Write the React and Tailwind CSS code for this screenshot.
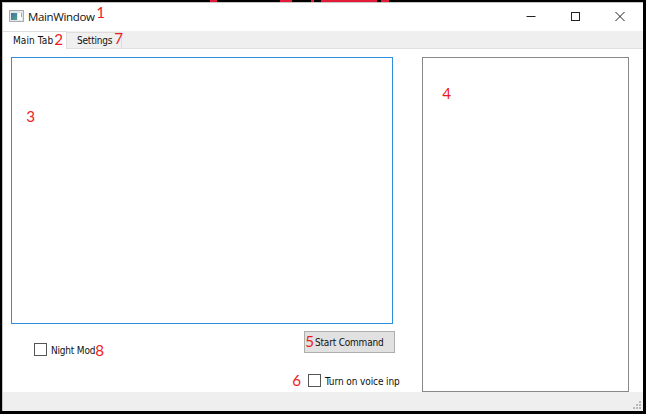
const wallpaperMarks = [
  'left-[210px] w-[7px]',
  'left-[280px] w-[12px]',
  'left-[311px] w-[3px]',
  'left-[321px] w-[56px]',
  'left-[381px] w-[8px]',
];

const notes = [
  { n: '1', at: 'left-[96px] top-[2px]' },
  { n: '2', at: 'left-[54px] top-[29px]' },
  { n: '3', at: 'left-[26px] top-[106px]' },
  { n: '4', at: 'left-[442px] top-[83px]' },
  { n: '5', at: 'left-[305px] top-[331px]' },
  { n: '6', at: 'left-[292px] top-[370px]' },
  { n: '7', at: 'left-[114px] top-[28px]' },
  { n: '8', at: 'left-[95px] top-[340px]' },
];

function TitleBar() {
  return (
    <header className="flex h-7 shrink-0 items-center justify-between bg-white pl-[6px] pr-[17px]">
      <div className="flex items-center">
        <svg width="15" height="12" viewBox="0 0 15 12" className="-mt-[3px]">
          <defs>
            <linearGradient id="pane" x1="0" y1="0" x2="1" y2="1">
              <stop offset="0" stopColor="#3f72a5" />
              <stop offset="1" stopColor="#55a285" />
            </linearGradient>
          </defs>
          <rect x="0.5" y="0.5" width="14" height="11" fill="#e4e6e8" stroke="#a9adb1" />
          <rect x="2" y="3" width="6" height="7" fill="url(#pane)" />
          <rect x="9" y="3" width="4" height="7" fill="#fff" />
          <path d="M12.5 3v4" stroke="#7eb6a8" />
        </svg>
        <h1 className="ml-[4px] -mt-px whitespace-nowrap font-['Open_Sans',sans-serif] text-[11.5px] font-normal leading-none tracking-[-0.35px] text-[#111]">
          MainWindow
        </h1>
      </div>
      <svg width="100" height="12" viewBox="0 0 100 12" fill="none" stroke="#222" className="-mt-[3px]">
        <path d="M0.5 6.5h9" />
        <rect x="45.5" y="2.5" width="8" height="8" />
        <path d="M89.5 2l9 9M98.5 2l-9 9" />
      </svg>
    </header>
  );
}

function CheckOption({ label, className, labelClass }) {
  return (
    <label className={`flex items-center ${className}`}>
      <span className="h-[13px] w-[13px] shrink-0 border border-[#555] bg-white" />
      <span className={`mt-[2px] whitespace-nowrap leading-none ${labelClass}`}>{label}</span>
    </label>
  );
}

export default function App() {
  return (
    <div className="relative h-[414px] w-[646px] overflow-hidden bg-black pb-[3px] pl-[2px] pr-[3px] pt-[2px] font-['DejaVu_Sans_Condensed','DejaVu_Sans',sans-serif] text-[10px] text-[#111]">
      {wallpaperMarks.map((mark) => (
        <span key={mark} className={`absolute top-0 h-[2px] bg-[#e41b38] ${mark}`} />
      ))}
      <div className="flex h-full flex-col border-l border-t border-[#c4c4c4] bg-[#efefef]">
        <TitleBar />
        <nav className="flex h-[18px] shrink-0 items-end border-b border-[#e0e0e0]">
          <div className="-mb-px flex h-[18px] w-[64px] items-center border-r border-t border-[#dedede] bg-white pl-[10px]">
            <span className="whitespace-nowrap leading-none tracking-[0.1px]">Main Tab</span>
          </div>
          <div className="flex h-4 w-[55px] items-center border-r border-t border-[#dedede] bg-[#f0f0f0] pl-[10px]">
            <span className="whitespace-nowrap leading-none tracking-[-0.2px]">Settings</span>
          </div>
        </nav>
        <main className="flex h-[343px] shrink-0 bg-white pl-2 pt-2">
          <section className="flex w-[411px] flex-col">
            <div className="h-[267px] w-[382px] border border-[#2f8fdc] bg-white" />
            <div className="flex">
              <CheckOption label="Night Mod" className="ml-[23px] mt-[19px] h-[13px] w-[258px]" labelClass="ml-1 tracking-[-0.2px]" />
              <div className="ml-[12px] mt-[7px] flex h-[22px] w-[91px] items-center border border-[#adadad] bg-[#e1e1e1] pl-[10px]">
                <span className="mt-px whitespace-nowrap leading-none tracking-[-0.2px]">Start Command</span>
              </div>
            </div>
            <CheckOption label="Turn on voice inp" className="ml-[297px] mt-[18px] h-[13px]" labelClass="ml-1 tracking-[-0.1px]" />
          </section>
          <div className="h-[335px] w-[207px] border border-[#888] bg-white" />
        </main>
        <footer className="flex flex-1 items-end justify-end pb-[2px] pr-[2px]">
          <svg width="8" height="8" fill="#b7b7b7">
            <path d="M6 0h2v2h-2zM3 3h2v2h-2zM6 3h2v2h-2zM0 6h2v2h-2zM3 6h2v2h-2zM6 6h2v2h-2z" />
          </svg>
        </footer>
      </div>
      {notes.map(({ n, at }) => (
        <span key={n} className={`absolute scale-x-95 font-['Lato',sans-serif] text-[16px] leading-[20px] text-[#ed1c24] ${at}`}>
          {n}
        </span>
      ))}
    </div>
  );
}
